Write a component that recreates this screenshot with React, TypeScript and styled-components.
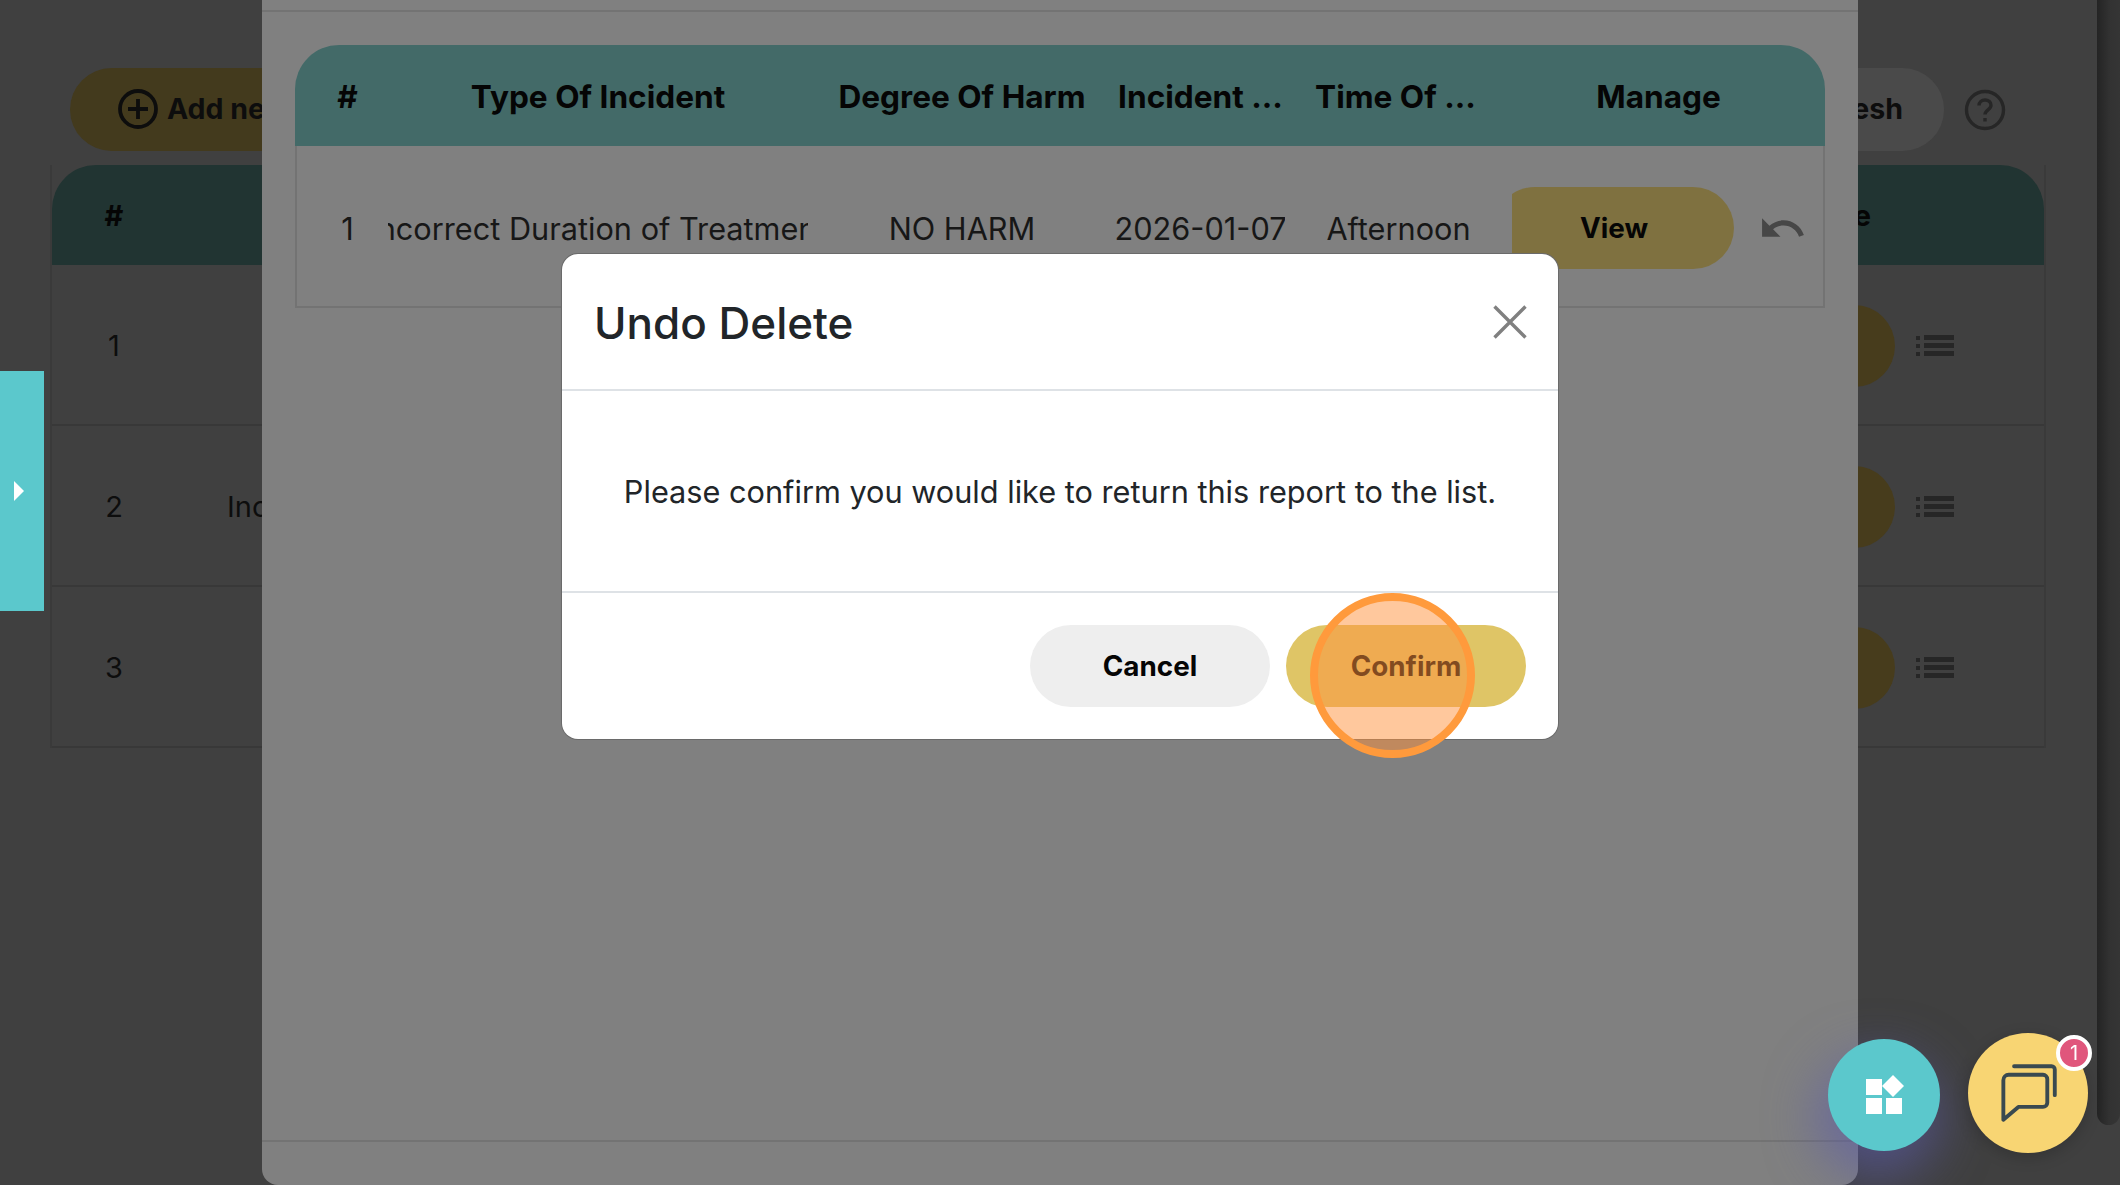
import styled, { createGlobalStyle } from 'styled-components';
import { MdUndo } from 'react-icons/md';

const GlobalStyle = createGlobalStyle`
  html, body {
    margin: 0;
    height: 100%;
    overflow: hidden;
    background: #404040;
    font-family: Inter, "Noto Sans", sans-serif;
  }
`;

const Page = styled.div`
  height: 1185px;
  padding: 68px 74px 0 50px;
  box-sizing: border-box;
`;

const Toolbar = styled.div`
  display: flex;
  align-items: center;
  padding: 0 20px;
  height: 83px;
  margin-bottom: 14px;
`;

const PageButton = styled.div<{ $tone: 'add' | 'plain' }>`
  display: flex;
  align-items: center;
  gap: 9px;
  height: 83px;
  box-sizing: border-box;
  padding: 0 41px 2px 48px;
  border-radius: 42px;
  background: ${(p) => (p.$tone === 'add' ? '#433a1d' : '#4a4a4a')};
  color: #0d0d0d;
  font-size: 28.5px;
  font-weight: 700;
`;

const ToolbarSpacer = styled.div`
  flex: 1;
`;

const HelpIcon = styled.svg`
  width: 42px;
  height: 42px;
  margin: 0 20px 0 20px;
`;

const BackTable = styled.div`
  border-left: 2px solid #3a3a3a;
  border-right: 2px solid #3a3a3a;
`;

const BackHead = styled.div`
  display: flex;
  align-items: center;
  justify-content: space-between;
  height: 100px;
  padding-right: 173px;
  border-radius: 44px 44px 0 0;
  background: #213432;
  color: #050505;
  font-size: 29px;
  font-weight: 700;
`;

const NumCell = styled.div`
  width: 124px;
  text-align: center;
`;

const BackTitle = styled.div`
  flex: 1;
  padding-left: 51px;
  white-space: nowrap;
`;

const BackRow = styled.div`
  display: flex;
  align-items: center;
  height: 161px;
  box-sizing: border-box;
  padding: 2px 90px 0 0;
  border-bottom: 2px solid #383838;
  color: #0d0d0d;
  font-size: 29px;
`;

const BackRowText = styled.div`
  display: flex;
  flex: 1;
`;

const BackPill = styled.div`
  width: 240px;
  height: 82px;
  border-radius: 41px;
  background: #473c1c;
`;

const ListIcon = styled.svg`
  width: 38px;
  height: 22px;
  margin-left: 21px;
  fill: #262626;
`;

const SideTab = styled.div`
  position: fixed;
  left: 0;
  top: 371px;
  width: 44px;
  height: 240px;
  display: flex;
  align-items: center;
  justify-content: center;
  background: #5bc8cc;
  &::after {
    content: '';
    margin-right: 6px;
    border-left: 10px solid #fff;
    border-top: 10px solid transparent;
    border-bottom: 10px solid transparent;
  }
`;

const Scrollbar = styled.div`
  position: fixed;
  top: 0;
  right: 0;
  width: 23px;
  height: 1125px;
  border-radius: 0 0 12px 12px;
  background: linear-gradient(90deg, #242424, #323232 55%, #353535);
`;

const Panel = styled.div`
  position: fixed;
  left: 262px;
  top: 0;
  width: 1596px;
  height: 1185px;
  display: flex;
  flex-direction: column;
  border-radius: 0 0 16px 16px;
  background: #808080;
`;

const PanelTop = styled.div`
  height: 10px;
  border-bottom: 2px solid #737373;
`;

const PanelBody = styled.div`
  flex: 1;
  padding: 33px 33px 0 33px;
`;

const PanelFoot = styled.div`
  height: 43px;
  border-top: 2px solid #737373;
`;

const HeadGrid = styled.div`
  display: grid;
  grid-template-columns: 93px 420px 308px 169px 227px 1fr;
  align-items: center;
  height: 101px;
  padding-top: 2px;
  box-sizing: border-box;
  border-radius: 44px 44px 0 0;
  background: #436a68;
  color: #050505;
  font-size: 31.6px;
  font-weight: 700;
`;

const HeadCell = styled.div<{ $shift?: number }>`
  text-align: center;
  white-space: nowrap;
  margin-left: ${(p) => p.$shift ?? 0}px;
`;

const RowGrid = styled.div`
  display: grid;
  grid-template-columns: 91px 420px 308px 169px 227px 1fr;
  align-items: center;
  height: 160px;
  border: 2px solid #737373;
  border-top: 0;
  color: #171717;
  font-size: 30.7px;
`;

const RowCell = styled.div<{ $shift?: number }>`
  display: flex;
  justify-content: center;
  overflow: hidden;
  white-space: nowrap;
  padding-top: 4px;
  margin-left: ${(p) => p.$shift ?? 0}px;
`;

const ManageCell = styled.div`
  display: flex;
  align-items: center;
  overflow: hidden;
  height: 82px;
  margin-top: 4px;
`;

const ViewButton = styled.div`
  flex: none;
  width: 240px;
  height: 82px;
  margin-left: -18px;
  display: flex;
  align-items: center;
  justify-content: center;
  border-radius: 41px;
  background: #7f7140;
  color: #050505;
  font-size: 27.8px;
  font-weight: 700;
`;

const UndoButton = styled(MdUndo)`
  flex: none;
  margin-left: 24px;
  color: #474747;
`;

const DialogLayer = styled.div`
  position: fixed;
  inset: 0;
  display: flex;
  justify-content: center;
  padding-top: 254px;
  pointer-events: none;
`;

const Dialog = styled.div`
  width: 996px;
  height: 485px;
  display: flex;
  flex-direction: column;
  border-radius: 16px;
  background: #fff;
  box-shadow: 0 0 0 1px #6a6a6a;
  overflow: hidden;
`;

const DialogHead = styled.div`
  height: 135px;
  flex: none;
  display: flex;
  align-items: center;
  justify-content: space-between;
  padding: 0 31px 0 32px;
  border-bottom: 2px solid #dee2e6;
`;

const DialogTitle = styled.h2`
  margin: 2px 0 0;
  color: #212529;
  font-size: 44px;
  font-weight: 500;
`;

const CloseIcon = styled.svg`
  width: 34px;
  height: 34px;
  stroke: #808080;
  stroke-width: 3.4;
`;

const DialogBody = styled.div`
  flex: 1;
  display: flex;
  align-items: center;
  justify-content: center;
  border-bottom: 2px solid #dee2e6;
  color: #212529;
  font-size: 30.7px;
`;

const DialogFoot = styled.div`
  height: 146px;
  flex: none;
  display: flex;
  align-items: center;
  justify-content: flex-end;
  gap: 16px;
  padding: 0 32px;
  box-sizing: border-box;
`;

const FootButton = styled.div<{ $tone: 'cancel' | 'confirm' }>`
  width: 240px;
  height: 82px;
  display: flex;
  align-items: center;
  justify-content: center;
  border-radius: 41px;
  background: ${(p) => (p.$tone === 'cancel' ? '#eeeeee' : '#dfc566')};
  color: #050505;
  font-size: 27.8px;
  font-weight: 700;
`;

const Spotlight = styled.div`
  position: fixed;
  left: 1310px;
  top: 593px;
  width: 165px;
  height: 165px;
  box-sizing: border-box;
  border: 8px solid #ff9a3c;
  border-radius: 50%;
  background: rgba(255, 146, 60, 0.5);
`;

const FabDock = styled.div`
  position: fixed;
  right: 32px;
  bottom: 32px;
  display: flex;
  align-items: center;
  gap: 28px;
`;

const AppsFab = styled.div`
  width: 112px;
  height: 112px;
  box-sizing: border-box;
  padding-left: 2px;
  margin-bottom: -4px;
  display: flex;
  align-items: center;
  justify-content: center;
  border-radius: 50%;
  background: #5bc8cc;
  box-shadow: -6px 22px 50px 6px rgba(92, 92, 170, 0.6);
`;

const ChatFab = styled.div`
  position: relative;
  width: 120px;
  height: 120px;
  display: flex;
  align-items: center;
  justify-content: center;
  border-radius: 50%;
  background: #f8d573;
  box-shadow: 0 4px 16px rgba(0, 0, 0, 0.2);
`;

const Badge = styled.div`
  position: absolute;
  top: 2px;
  right: -4px;
  width: 28px;
  height: 28px;
  display: flex;
  align-items: center;
  justify-content: center;
  border: 4px solid #fff;
  border-radius: 50%;
  background: #e0567c;
  color: #fff;
  font-size: 20px;
`;

const List = () => (
  <ListIcon viewBox="0 0 38 22">
    <rect x="0" y="1" width="4" height="4" />
    <rect x="0" y="9" width="4" height="4" />
    <rect x="0" y="17" width="4" height="4" />
    <rect x="8" y="0" width="30" height="5" />
    <rect x="8" y="8" width="30" height="5" />
    <rect x="8" y="16" width="30" height="5" />
  </ListIcon>
);

const backRows = [
  { num: 1, text: '' },
  { num: 2, text: 'Incorrect Duration of Treatment' },
  { num: 3, text: '' },
];

export default function App() {
  return (
    <>
      <GlobalStyle />
      <Page>
        <Toolbar>
          <PageButton $tone="add">
            <svg width="40" height="40" viewBox="0 0 40 40" fill="none" stroke="#0d0d0d" strokeWidth="3.8">
              <circle cx="20" cy="20" r="18" />
              <path d="M20 10v20M10 20h20" />
            </svg>
            Add new
          </PageButton>
          <ToolbarSpacer />
          <PageButton $tone="plain">Refresh</PageButton>
          <HelpIcon viewBox="0 0 42 42" fill="none" stroke="#262626" strokeWidth="3.4">
            <circle cx="21" cy="21" r="18.5" />
            <path d="M15 16.5c0-3.5 2.7-5.5 6-5.5s6 2 6 5.2c0 4.6-6 4.6-6 9.3" />
            <path d="M21 29v3.5" />
          </HelpIcon>
        </Toolbar>
        <BackTable>
          <BackHead>
            <NumCell>#</NumCell>
            <div>Manage</div>
          </BackHead>
          {backRows.map((row) => (
            <BackRow key={row.num}>
              <BackRowText>
                <NumCell>{row.num}</NumCell>
                <BackTitle>{row.text}</BackTitle>
              </BackRowText>
              <BackPill />
              <List />
            </BackRow>
          ))}
        </BackTable>
      </Page>
      <SideTab />
      <Scrollbar />
      <Panel>
        <PanelTop />
        <PanelBody>
          <HeadGrid>
            <HeadCell $shift={12}>#</HeadCell>
            <HeadCell>Type Of Incident</HeadCell>
            <HeadCell>Degree Of Harm</HeadCell>
            <HeadCell>Incident ...</HeadCell>
            <HeadCell $shift={-6}>Time Of ...</HeadCell>
            <HeadCell $shift={-20}>Manage</HeadCell>
          </HeadGrid>
          <RowGrid>
            <RowCell $shift={10}>1</RowCell>
            <RowCell>Incorrect Duration of Treatment</RowCell>
            <RowCell>NO HARM</RowCell>
            <RowCell>2026-01-07</RowCell>
            <RowCell>Afternoon</RowCell>
            <ManageCell>
              <ViewButton>View</ViewButton>
              <UndoButton size={49} />
            </ManageCell>
          </RowGrid>
        </PanelBody>
        <PanelFoot />
      </Panel>
      <DialogLayer>
        <Dialog>
          <DialogHead>
            <DialogTitle>Undo Delete</DialogTitle>
            <CloseIcon viewBox="0 0 34 34" fill="none">
              <path d="M1.5 1.5l31 31M32.5 1.5l-31 31" />
            </CloseIcon>
          </DialogHead>
          <DialogBody>Please confirm you would like to return this report to the list.</DialogBody>
          <DialogFoot>
            <FootButton $tone="cancel">Cancel</FootButton>
            <FootButton $tone="confirm">Confirm</FootButton>
          </DialogFoot>
        </Dialog>
      </DialogLayer>
      <Spotlight />
      <FabDock>
        <AppsFab>
          <svg width="40" height="40" viewBox="0 0 40 40" fill="#fff">
            <rect x="1" y="4" width="16" height="16" />
            <rect x="1" y="23" width="16" height="16" />
            <rect x="21" y="23" width="16" height="16" />
            <path d="M28 0l11 11-11 11-11-11z" />
          </svg>
        </AppsFab>
        <ChatFab>
          <svg width="60" height="60" viewBox="0 0 56 56" fill="none" stroke="#3a4a50" strokeWidth="3.6" strokeLinecap="round" strokeLinejoin="round">
            <path d="M15 3h35a3 3 0 0 1 3 3v24" />
            <path d="M10 11h32a4 4 0 0 1 4 4v22a4 4 0 0 1-4 4H19L5 53V16a5 5 0 0 1 5-5z" />
          </svg>
          <Badge>1</Badge>
        </ChatFab>
      </FabDock>
    </>
  );
}
